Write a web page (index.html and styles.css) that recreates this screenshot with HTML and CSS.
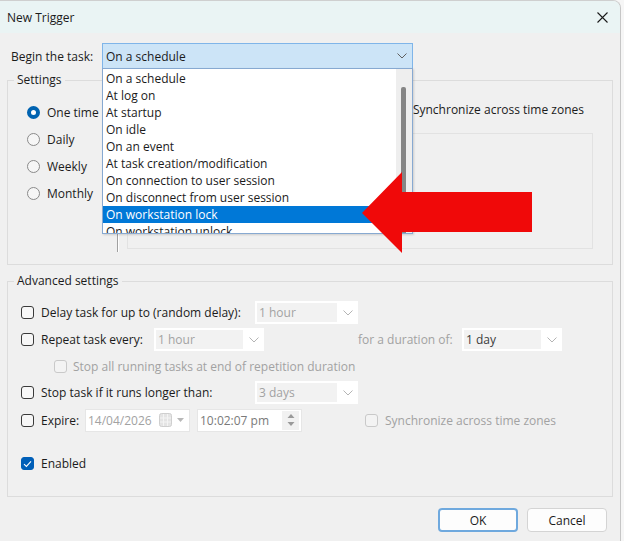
FILE: index.html
```html
<!DOCTYPE html>
<html lang="en">

<head>
    <meta charset="UTF-8">
    <title>New Trigger</title>
    <link rel="stylesheet" href="styles.css">
</head>

<body>

    <div class="window">
        <div class="titlebar">
            <span>New Trigger</span>
            <svg class="close" width="11" height="11" viewBox="0 0 11 11">
                <path d="M0.5 0.5 L10.5 10.5 M10.5 0.5 L0.5 10.5" stroke="#1a1a1a" stroke-width="1.1" fill="none" />
            </svg>
        </div>

        <div class="dialog">
            <div class="begin-row">
                <label class="begin-label">Begin the task:</label>
                <div class="combo-active">
                    <span>On a schedule</span>
                    <svg width="10" height="6" viewBox="0 0 10 6">
                        <polyline points="0.5,0.5 5,5 9.5,0.5" stroke="#606060" fill="none" />
                    </svg>

                    <!-- open dropdown list -->
                    <div class="dropdown">
                        <ul class="dropdown-items">
                            <li>On a schedule</li>
                            <li>At log on</li>
                            <li>At startup</li>
                            <li>On idle</li>
                            <li>On an event</li>
                            <li>At task creation/modification</li>
                            <li>On connection to user session</li>
                            <li>On disconnect from user session</li>
                            <li class="selected">On workstation lock</li>
                            <li>On workstation unlock</li>
                        </ul>
                        <div class="scrollbar">
                            <div class="thumb"></div>
                        </div>
                    </div>
                </div>
            </div>

            <fieldset class="group settings">
                <legend>Settings</legend>
                <div class="settings-body">
                    <div class="radios">
                        <div class="radio-row"><span class="radio on"></span>One time</div>
                        <div class="radio-row"><span class="radio"></span>Daily</div>
                        <div class="radio-row"><span class="radio"></span>Weekly</div>
                        <div class="radio-row"><span class="radio"></span>Monthly</div>
                    </div>
                    <div class="divider"></div>
                    <div class="schedule">
                        <div class="start-row">
                            <span class="box"></span>
                            <span>Synchronize across time zones</span>
                        </div>
                        <div class="detail-box"></div>
                    </div>
                </div>
            </fieldset>

            <fieldset class="group advanced">
                <legend>Advanced settings</legend>
                <div class="adv-body">
                    <div class="row r1">
                        <div class="check w-delay"><span class="box"></span>Delay task for up to (random delay):</div>
                        <div class="select sel-a">
                            <span class="val off">1 hour</span>
                            <span class="arrow-cell"><svg width="10" height="6" viewBox="0 0 10 6"><polyline points="0.5,0.5 5,5 9.5,0.5" stroke="#b4b4b4" fill="none" /></svg></span>
                        </div>
                    </div>
                    <div class="row r2">
                        <div class="check w-repeat"><span class="box"></span>Repeat task every:</div>
                        <div class="select sel-b">
                            <span class="val off">1 hour</span>
                            <span class="arrow-cell"><svg width="10" height="6" viewBox="0 0 10 6"><polyline points="0.5,0.5 5,5 9.5,0.5" stroke="#b4b4b4" fill="none" /></svg></span>
                        </div>
                        <span class="muted duration-label">for a duration of:</span>
                        <div class="select sel-c">
                            <span class="val">1 day</span>
                            <span class="arrow-cell"><svg width="10" height="6" viewBox="0 0 10 6"><polyline points="0.5,0.5 5,5 9.5,0.5" stroke="#b4b4b4" fill="none" /></svg></span>
                        </div>
                    </div>
                    <div class="row r3">
                        <div class="check indent muted"><span class="box dis"></span>Stop all running tasks at end of repetition duration</div>
                    </div>
                    <div class="row r4">
                        <div class="check w-delay"><span class="box"></span>Stop task if it runs longer than:</div>
                        <div class="select sel-a">
                            <span class="val off">3 days</span>
                            <span class="arrow-cell"><svg width="10" height="6" viewBox="0 0 10 6"><polyline points="0.5,0.5 5,5 9.5,0.5" stroke="#b4b4b4" fill="none" /></svg></span>
                        </div>
                    </div>
                    <div class="row r5">
                        <div class="check w-expire"><span class="box"></span>Expire:</div>
                        <div class="field date">
                            <span class="off">14/04/2026</span>
                            <svg class="cal" width="26" height="14" viewBox="0 0 26 14">
                                <rect x="0.5" y="0.5" width="12" height="13" rx="2" fill="#e4e4e4" stroke="#cfcfcf" />
                                <path d="M4.5 1 V13 M8.5 1 V13 M1 5 H12 M1 9 H12" stroke="#f4f4f4" />
                                <polygon points="18,5 25,5 21.5,9" fill="#b8b8b8" />
                            </svg>
                        </div>
                        <div class="field time">
                            <span class="time-val">10:02:07 pm</span>
                            <span class="spin">
                                <svg width="8" height="16" viewBox="0 0 8 16">
                                    <polygon points="4,2 7.5,6 0.5,6" fill="#9a9a9a" />
                                    <polygon points="0.5,10 7.5,10 4,14" fill="#9a9a9a" />
                                </svg>
                            </span>
                        </div>
                        <div class="check muted sync"><span class="box dis"></span>Synchronize across time zones</div>
                    </div>
                    <div class="row r6">
                        <div class="check">
                            <span class="box checked">
                                <svg width="9" height="8" viewBox="0 0 9 8"><polyline points="1,4.2 3.4,6.4 8,1.4" stroke="#fff" stroke-width="1.1" fill="none" /></svg>
                            </span>Enabled
                        </div>
                    </div>
                </div>
            </fieldset>

            <div class="buttons">
                <button class="btn default">OK</button>
                <button class="btn">Cancel</button>
            </div>
        </div>
    </div>

    <!-- red arrow pointing at the selected item -->
    <svg class="pointer" width="624" height="541" viewBox="0 0 624 541">
        <polygon points="362,213 402,172 402,192 532,192 532,232 402,232 402,253" fill="#f00909" />
    </svg>

</body>

</html>
```

FILE: styles.css
```css
* {
    box-sizing: border-box;
}

body {
    margin: 0;
    background-color: #f6f6f6;
    font-family: "Open Sans", "Noto Sans", sans-serif;
    font-size: 12px;
    color: #1b1b1b;
}

.window {
    width: 621px;
    height: 541px;
    background-color: #f0f0f0;
    border-top: 1px solid #cfcfcf;
    border-right: 1px solid #c6c6c6;
    border-top-right-radius: 8px;
    overflow: hidden;
}

.titlebar {
    height: 32px;
    background-color: #eaf4f4;
    display: flex;
    align-items: center;
    justify-content: space-between;
    padding: 0 12px 0 7px;
}

.dialog {
    padding: 10px 7px 0 7px;
}

/* begin the task */
.begin-row {
    display: flex;
    align-items: center;
    height: 26px;
}

.begin-label {
    width: 95px;
    padding-left: 4px;
}

.combo-active {
    position: relative;
    width: 311px;
    height: 26px;
    display: flex;
    align-items: center;
    justify-content: space-between;
    padding: 0 5px 0 3px;
    background-color: #cce4f7;
    border: 1px solid #7fb5e9;
}

.dropdown {
    position: absolute;
    top: 24px;
    left: -1px;
    width: 311px;
    height: 166px;
    display: flex;
    background-color: #fff;
    border: 1px solid #87a9d1;
    box-shadow: 1px 1px 2px rgba(0, 0, 0, 0.15);
    overflow: hidden;
    z-index: 10;
}

.dropdown-items {
    flex: 1;
    margin: 0;
    padding: 1px 0 0 0;
    list-style: none;
}

.dropdown-items li {
    height: 17px;
    line-height: 17px;
    padding-left: 3px;
    white-space: nowrap;
}

.dropdown-items li.selected {
    background-color: #0078d7;
    color: #fff;
}

.scrollbar {
    width: 16px;
    background-color: #eeeeee;
    padding: 18px 0 0 5px;
}

.thumb {
    width: 5px;
    height: 150px;
    border-radius: 2px;
    background-color: #858585;
}

/* group boxes */
fieldset.group {
    margin: 0;
    padding: 0;
    min-width: 0;
    border: 1px solid #dcdcdc;
}

fieldset.group legend {
    margin-left: 6px;
    padding: 0 3px;
    line-height: 16px;
}

fieldset.settings {
    margin-top: 3px;
}

.settings-body {
    display: flex;
    padding: 9px 19px 15px 19px;
}

.radios {
    width: 90px;
    padding-top: 2px;
}

.radio-row {
    height: 27px;
    display: flex;
    align-items: center;
    gap: 7px;
}

.radio {
    width: 13px;
    height: 13px;
    border-radius: 50%;
    border: 1px solid #8a8a8a;
    background-color: #f6f6f6;
}

.radio.on {
    border: 4px solid #0063b1;
    background-color: #fff;
}

.divider {
    width: 2px;
    border-left: 1px solid #a0a0a0;
    border-right: 1px solid #fff;
    margin-bottom: -3px;
}

.schedule {
    flex: 1;
    margin-left: 8px;
}

.start-row {
    height: 24px;
    display: flex;
    align-items: center;
    justify-content: flex-end;
    gap: 5px;
    padding-right: 9px;
}

.detail-box {
    margin-top: 12px;
    height: 116px;
    border: 1px solid #e2e2e2;
}

/* advanced settings */
fieldset.advanced {
    margin-top: 8px;
}

.adv-body {
    padding: 10px 0 19px 13px;
}

.row {
    display: flex;
    align-items: center;
    height: 27px;
}

.r3 {
    height: 26px;
}

.r5 {
    height: 28px;
}

.r6 {
    margin-top: 16px;
}

.check {
    display: flex;
    align-items: center;
    gap: 7px;
    flex: none;
}

.box {
    width: 13px;
    height: 13px;
    flex: none;
    border: 1px solid #3a3a3a;
    border-radius: 3px;
    background-color: #f7f7f7;
}

.box.dis {
    border-color: #c9c9c9;
    background-color: #f3f3f3;
}

.box.checked {
    display: flex;
    align-items: center;
    justify-content: center;
    border-color: #005fb8;
    background-color: #005fb8;
}

.muted {
    color: #a2a2a2;
}

.indent {
    padding-left: 33px;
    gap: 6px;
}

.w-delay {
    width: 234px;
}

.w-repeat {
    width: 133px;
}

.w-expire {
    width: 64px;
}

.select {
    height: 23px;
    display: flex;
    padding: 2px 0 2px 2px;
    background-color: #fff;
}

.select .val {
    flex: 1;
    display: flex;
    align-items: center;
    padding-left: 2px;
    background-color: #f2f2f2;
    color: #3c3c3c;
}

.select .val.off {
    color: #a2a2a2;
}

.arrow-cell {
    width: 21px;
    display: flex;
    align-items: center;
    justify-content: center;
}

.sel-a {
    width: 103px;
}

.sel-b {
    width: 110px;
}

.sel-c {
    width: 100px;
}

.duration-label {
    width: 104px;
    margin-left: 94px;
}

.field {
    height: 23px;
    width: 105px;
    display: flex;
    align-items: center;
    justify-content: space-between;
    background-color: #fff;
    border: 1px solid #e6e6e6;
    padding-left: 2px;
}

.off {
    color: #a2a2a2;
}

.date .cal {
    margin-right: 4px;
}

.time {
    margin-left: 7px;
    padding-right: 2px;
}

.time-val {
    color: #7a7a7a;
}

.spin {
    width: 17px;
    height: 19px;
    display: flex;
    align-items: center;
    justify-content: center;
    background-color: #f1f1f1;
}

.sync {
    margin-left: 63px;
}

/* buttons */
.buttons {
    display: flex;
    justify-content: flex-end;
    gap: 9px;
    margin-top: 11px;
    padding-right: 6px;
}

.btn {
    width: 80px;
    height: 24px;
    font-family: "Open Sans", "Noto Sans", sans-serif;
    font-size: 12px;
    color: #1b1b1b;
    background-color: #fdfdfd;
    border: 1px solid #d4d4d4;
    border-radius: 4px;
}

.btn.default {
    border: 2px solid #6fa9de;
}

.pointer {
    position: absolute;
    top: 0;
    left: 0;
    pointer-events: none;
    z-index: 20;
}
```
